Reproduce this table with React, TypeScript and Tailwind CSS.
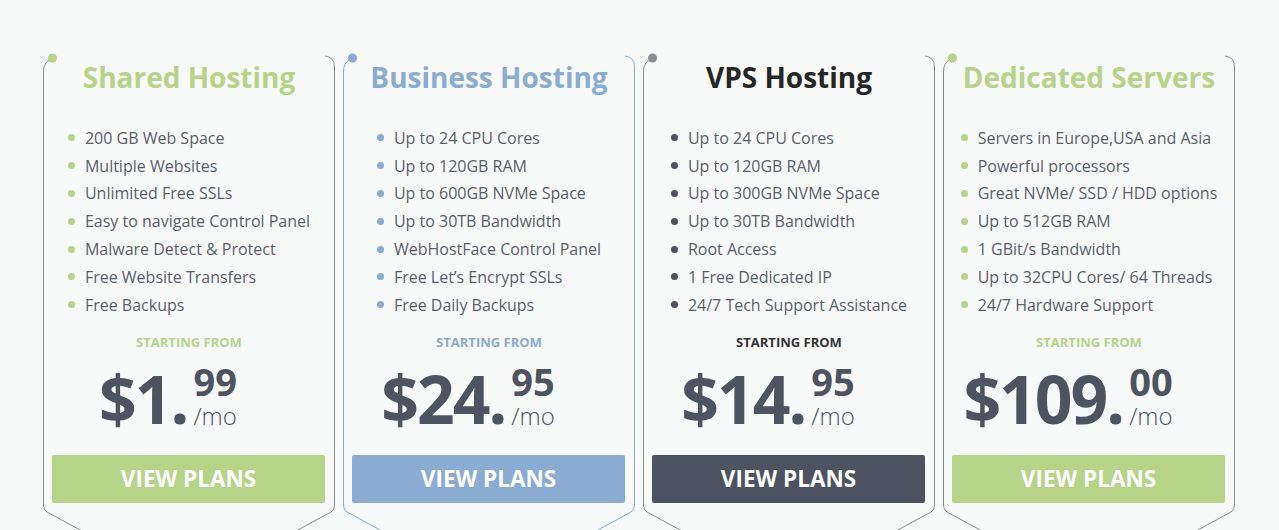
import React from 'react';

type Plan = {
  title: string;
  titleColor: string;
  accent: string;
  label: string;
  bullet: string;
  button: string;
  frame: string;
  features: string[];
  whole: string;
  cents: string;
};

const plans: Plan[] = [
  {
    title: 'Shared Hosting',
    titleColor: 'text-[#b5d487]',
    accent: '#b5d487',
    label: 'text-[#b5d487]',
    bullet: 'bg-[#b5d487]',
    button: 'bg-[#b5d487]',
    frame: '#8c8c8c',
    features: [
      '200 GB Web Space',
      'Multiple Websites',
      'Unlimited Free SSLs',
      'Easy to navigate Control Panel',
      'Malware Detect & Protect',
      'Free Website Transfers',
      'Free Backups',
    ],
    whole: '$1.',
    cents: '99',
  },
  {
    title: 'Business Hosting',
    titleColor: 'text-[#8aacd3]',
    accent: '#8aacd3',
    label: 'text-[#8aacd3]',
    bullet: 'bg-[#8aacd3]',
    button: 'bg-[#8aacd3]',
    frame: '#8aacd3',
    features: [
      'Up to 24 CPU Cores',
      'Up to 120GB RAM',
      'Up to 600GB NVMe Space',
      'Up to 30TB Bandwidth',
      'WebHostFace Control Panel',
      'Free Let’s Encrypt SSLs',
      'Free Daily Backups',
    ],
    whole: '$24.',
    cents: '95',
  },
  {
    title: 'VPS Hosting',
    titleColor: 'text-[#262626]',
    accent: '#8a8d94',
    label: 'text-[#333333]',
    bullet: 'bg-[#4d5260]',
    button: 'bg-[#4d5260]',
    frame: '#8c8c8c',
    features: [
      'Up to 24 CPU Cores',
      'Up to 120GB RAM',
      'Up to 300GB NVMe Space',
      'Up to 30TB Bandwidth',
      'Root Access',
      '1 Free Dedicated IP',
      '24/7 Tech Support Assistance',
    ],
    whole: '$14.',
    cents: '95',
  },
  {
    title: 'Dedicated Servers',
    titleColor: 'text-[#b5d487]',
    accent: '#b5d487',
    label: 'text-[#b5d487]',
    bullet: 'bg-[#b5d487]',
    button: 'bg-[#b5d487]',
    frame: '#8c8c8c',
    features: [
      'Servers in Europe,USA and Asia',
      'Powerful processors',
      'Great NVMe/ SSD / HDD options',
      'Up to 512GB RAM',
      '1 GBit/s Bandwidth',
      'Up to 32CPU Cores/ 64 Threads',
      '24/7 Hardware Support',
    ],
    whole: '$109.',
    cents: '00',
  },
];

// outline of the card: open top, rounded shoulders, chevron at the bottom
function Frame({ stroke, dot }: { stroke: string; dot: string }) {
  return (
    <svg className="absolute left-0 top-0 pointer-events-none" width="292" height="560" viewBox="0 0 292 560" fill="none">
      <path d="M7 10 Q0.5 12 0.5 22 L0.5 455 Q0.5 460 4 462 L146 539" stroke={stroke} strokeWidth="1" />
      <path d="M282 6 Q291.5 7 291.5 17 L291.5 455 Q291.5 460 288 462 L146 539" stroke={stroke} strokeWidth="1" />
      <circle cx="9.5" cy="8" r="4.5" fill={dot} />
    </svg>
  );
}

function PlanCard({ plan }: { plan: Plan }) {
  return (
    <div className="relative w-[292px] h-[560px] shrink-0">
      <Frame stroke={plan.frame} dot={plan.accent} />
      <div className="relative flex flex-col">
        {/* Heading */}
        <h2 className={`mt-[9px] text-center text-[28px] leading-[36px] font-bold ${plan.titleColor}`}>
          {plan.title}
        </h2>

        {/* Feature list */}
        <ul className="mt-[29px] mx-auto w-fit">
          {plan.features.map((f) => (
            <li key={f} className="flex items-center h-[27.8px] text-[16px] text-[#5a5f6b]">
              <span className={`w-[7px] h-[7px] rounded-full mr-[10px] shrink-0 ${plan.bullet}`} />
              {f}
            </li>
          ))}
        </ul>

        <p className={`mt-[15px] text-center text-[13px] leading-[16px] font-bold uppercase ${plan.label}`}>
          Starting from
        </p>

        {/* Price */}
        <div className="mt-[12px] flex justify-center pr-[42px] text-[#4d5361]">
          <span className="mt-[3px] text-[66px] leading-none font-bold tracking-[-2px]">{plan.whole}</span>
          <div className="ml-[6px] flex flex-col">
            <span className="h-[38px] text-[38px] leading-none font-bold">{plan.cents}</span>
            <span className="mt-[5px] text-[24px] leading-[22px] font-light font-['Open_Sans_Light','Open_Sans',sans-serif]">
              /mo
            </span>
          </div>
        </div>

        <button
          className={`mt-[24px] mx-[9px] w-[273px] h-[48px] rounded-[2px] text-white text-[22.5px] font-bold uppercase ${plan.button}`}
        >
          View plans
        </button>
      </div>
    </div>
  );
}

export default function App() {
  return (
    <div className="h-[530px] overflow-hidden bg-[#f8f9f9] font-['Open_Sans',sans-serif]">
      <div className="pt-[50px] pl-[43px] flex gap-[8px]">
        {plans.map((p) => (
          <PlanCard key={p.title} plan={p} />
        ))}
      </div>
    </div>
  );
}
